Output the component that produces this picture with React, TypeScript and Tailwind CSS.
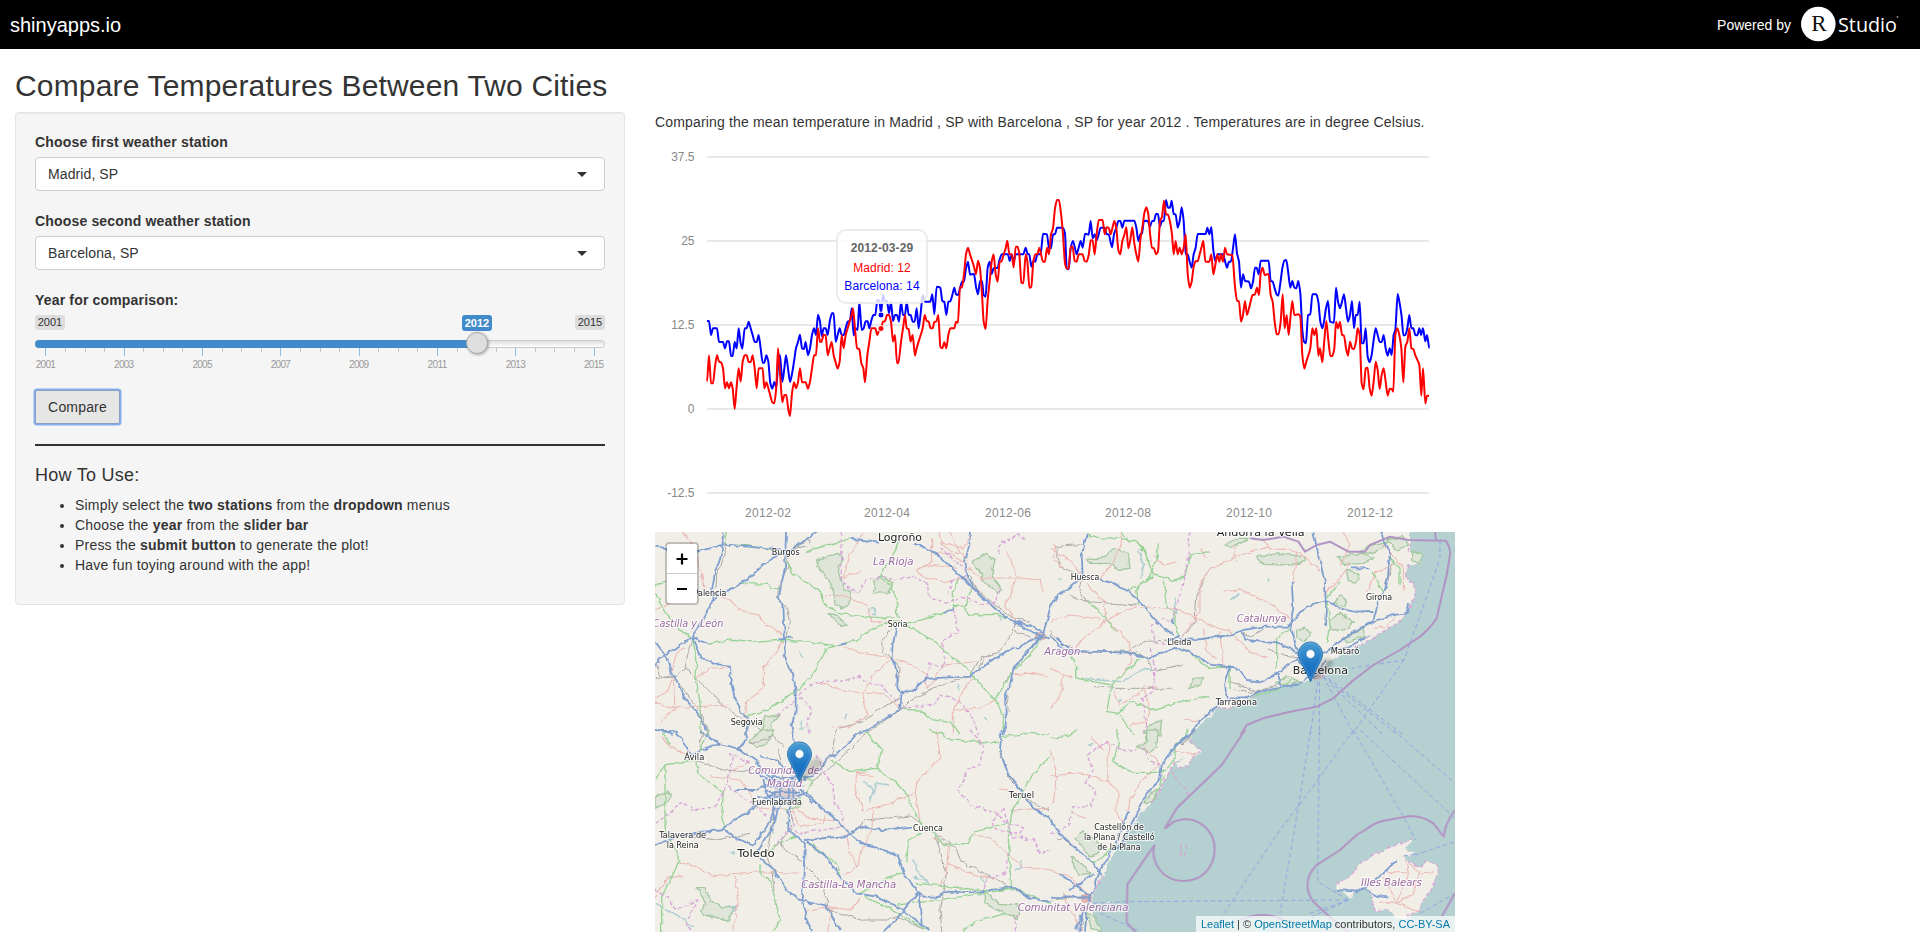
import React from "react";

type Layer = {
  motorway: string;
  primary: string;
  secondary: string;
  rail: string;
  border: string;
  park: string;
  water: string;
  ferry: string;
  maritime: string;
};

type Label = [text: string, x: number, y: number, length: number, kind: "town" | "city" | "region"];

type Sheet = { transform: string; layer: Layer; labels: Label[] };

const NORTH_WEST: Sheet = {
  transform: "translate(-5 -7) scale(0.33333)",
  layer: {
    motorway:
      "M15,65L60,70L145,78L180,70L222,58L290,65L330,68L408,74M218,20L218,60L212,95L195,140L187,190L187,225L160,285L125,335L75,375L45,388L15,350M45,388L15,425M45,388L55,410L60,435L85,475L105,520L130,550L165,600L175,630M125,335L150,385L155,400L185,410L200,418L240,422L243,470L255,525L275,560L300,590L285,630M408,20L405,130L390,195L387,220L400,240L402,290L405,340L403,390L425,440L437,490L437,560L425,600L428,630M500,20L465,45L440,65L408,78M605,42L690,50M408,78L370,95L335,125L290,165L240,195L190,205M790,55L830,70L860,85L900,125L945,165L985,205L1040,255L1090,290L1175,335L1200,340M960,20L958,60L945,110L955,160L985,205M1095,292L1140,300L1185,325M125,335L150,350L175,357M565,360L592,355M385,340L428,338M740,305L728,360L725,400L742,440L742,490L755,505L790,495L825,462L880,458L960,455L1000,425L1040,395L1090,370L1110,370L1130,350L1175,335M755,505L750,555L690,590L625,630M1175,335L1140,370L1090,430L1080,480L1065,510L1068,590L1060,630M885,262L910,248M1175,335L1190,290L1200,250M15,615L50,615L70,630M187,225L200,215L215,210",
    primary:
      "M232,20L225,60L290,62L330,70L400,75M470,80L530,60L600,42M15,180L45,172M275,175L355,178L365,190L395,190M175,357L250,343L320,352L395,345L480,352L565,362L620,345L660,315L720,290L770,295L830,280L885,260L910,248L910,200L925,165M408,110L430,145L515,200L520,235L570,265L640,275L735,280M745,280L740,230L725,180L690,160L700,130L720,110L745,50M770,300L840,340L900,390L965,445L1035,525L1060,570L1060,620M910,245L945,243L960,270L1040,268L1085,285M945,243L965,190M15,205L50,265L85,310L120,335M128,345L140,400L138,460L150,530L153,630M285,575L360,550L435,500L470,470L495,440L510,410L530,370L565,360M750,553L810,555L840,580L900,590L930,630M1035,520L1070,470L1085,440L1140,390L1170,345",
    secondary:
      "M150,150L170,190M100,20L135,80L165,190M15,255L60,235M190,205L240,225L270,255L320,270L350,300L400,330M400,345L370,390L340,430L340,490L290,530L285,590M15,530L60,548L140,545L235,540M140,460L180,430L240,425M640,25L600,90L580,160L630,140M525,210L570,212L650,240L665,290L745,290M580,365L640,385L725,400M725,400L680,440L650,480L640,520L655,570L600,605L550,605M725,400L800,425L830,450M825,462L835,490L880,420L980,410M845,40L845,110L800,135L820,155L880,170L950,160M870,50L900,80L945,85M845,80L910,90L950,120M805,130L840,120L920,130M900,20L915,60L955,110M1070,80L1100,155L1080,210L1065,240L1095,285M1000,160L1100,158L1170,165L1180,200M955,130L1000,165M1085,450L1140,445L1200,455M500,470L580,495L640,505L700,505L750,550M970,455L945,490L910,550L910,630M1035,525L990,550L910,555M70,455L75,550L30,590M105,370L80,385L60,450M870,20L875,50L940,70L960,30M15,520L50,500L70,460",
    rail:
      "M228,20L225,90L200,150L198,190M408,80L415,120L385,190L382,220L410,250L418,290L412,335M130,340L115,380L105,430L75,455L20,460M105,430L160,480L220,540L285,590L340,620M725,310L695,350L697,380L725,400M725,400L750,430L745,470M565,610L640,590L690,550L750,520M640,630L750,555L780,525L870,480L960,455L990,400L1050,380L1090,320L1095,290M985,430L1000,400L1030,390M1095,320L1150,340M960,150L985,200L1090,280L1140,290M1075,455L1065,475M20,420L30,450L70,458M1070,510L1075,560M440,70L475,40L480,55M75,460L120,520L150,560L180,625M408,78L470,62",
    border:
      "M575,20L572,90L575,170L620,205L650,165L700,155L735,165L790,155L830,175L840,215L890,235L940,215L1000,240L1040,230L1050,185M910,250L925,320L875,350L885,425L840,415L828,470M380,575L430,530L445,510L495,470L580,468L625,455L650,470L690,480L745,530L755,550L855,540L870,510L930,530L970,580L985,630M450,515L485,555L470,600L480,630M1045,85L1050,50L1090,40L1100,25L1125,45M870,70L955,140M895,210L905,170L950,150",
    park:
      "M500,105L530,95L565,85L575,100L565,140L580,190L605,200L600,235L575,250L555,235L550,195L535,165L505,130ZM675,165L700,155L728,175L715,205L670,203ZM965,110L1010,85L1035,105L1025,150L1055,190L1045,205L1000,170L985,135ZM535,265L560,270L590,300L575,307L555,285ZM345,575L390,570L365,600L370,630L330,630Z",
    water:
      "M655,255L675,250L668,270L680,265M445,380L460,400L450,385M455,590L450,610L465,605M1045,268L1055,285M925,480L930,495M1000,575L1012,590M585,580L590,565",
    ferry: "",
    maritime: "",
  },
  labels: [
    ["Burgos", 407, 91, 84, "town"],
    ["Palencia", 180, 213, 98, "town"],
    ["Logroño", 750, 47, 132, "city"],
    ["La Rioja", 730, 119, 122, "region"],
    ["Soria", 743, 305, 59, "town"],
    ["Segovia", 290, 600, 96, "town"],
    ["Castilla y León", 114, 306, 212, "region"],
  ],
};

const NORTH_EAST: Sheet = {
  transform: "translate(395 -7) scale(0.33333)",
  layer: {
    motorway:
      "M110,30L95,90L98,150L60,185L20,215L0,250M150,163L190,175L235,200L280,240L320,290L370,330M0,330L40,375L120,380L230,383L300,400L330,385L375,372M20,340L60,375M355,345L385,335L400,345L455,342L540,330L580,315L640,305L710,305L730,285L770,245L830,228L870,250L910,260L970,258M370,372L400,373L440,395L480,418L565,432L590,465L640,470L690,440L720,415L745,395M570,320L590,345L680,355L720,370L745,390M725,170L730,250L720,300L735,350L745,385M790,20L805,90L825,170L828,250L825,300M990,20L1020,90L1012,170L985,230L970,285L900,330L840,370L780,410M1078,235L1070,265L1030,270L970,290L930,310M540,430L525,480L530,520M775,455L740,480L690,485L630,500L585,520L530,520L500,545L450,590L420,630M690,485L685,440M905,130L960,130M835,375L890,370L960,330M370,300L368,280M740,400L790,460L830,405",
    primary:
      "M110,30L140,40L200,38L260,50L280,70L310,150L370,165L405,155L418,90L480,80M262,50L300,110M325,55L322,90L300,155L260,190L265,240M340,170L350,250L375,260L375,300L385,335M115,230L170,280L200,320M400,370L450,410L480,430L540,425L540,490M60,390L80,430L80,460L185,480L215,450L270,400M185,480L170,560L210,565L240,530L320,555L390,530L480,515M600,520L690,490L730,460M725,305L680,340L680,430M830,350L840,300L830,220L870,170M970,140L985,180L1000,200M1015,95L1050,130L1050,180M210,570L250,630M235,195L270,180L310,155M215,20L240,50",
    secondary:
      "M0,70L60,105L95,150M0,290L60,270L170,285L220,260L260,245M170,285L160,230L110,175M170,285L210,320L240,360L245,410L215,450M170,285L100,340L60,390M150,165L190,110L210,60L215,20M270,245L370,250L440,280L480,300L540,320L600,380L650,400M480,130L450,180L450,260L400,330M480,130L570,90L640,70L720,75L760,90L810,140M520,200L570,195L650,230L720,280M740,80L730,170M455,70L470,100M15,60L10,100L40,130M880,20L900,60L870,120M640,40L660,75M900,110L870,160L820,210M460,310L470,380L500,400M510,320L520,430M40,450L30,520L0,550M190,500L210,540L290,490L320,485M280,480L300,560L290,590L240,600M0,430L70,460M950,200L980,140L1030,120M1000,60L1060,130L1060,200M400,580L450,590M310,90L340,120L380,110M550,60L560,110M970,310L1010,305L1040,270",
    rail:
      "M15,65L70,60L100,60M20,70L30,125L90,150M60,210L110,230L90,200L98,155M110,230L190,235L260,240M230,380L280,350L355,345M95,382L220,378L290,395L310,440L360,430L400,420M130,485L200,490L280,490L370,490M470,140L440,220L435,290L400,335M540,470L620,500L680,480M570,320L600,335L640,310M650,370L700,390L740,395M1030,110L1000,200M545,490L620,505M0,320L40,360L95,378",
    border:
      "M420,20L415,80L400,180L380,240L370,290L345,280L305,300L315,350L350,360M300,370L315,430L310,500L275,520L290,600L280,630M1080,50L1078,80M1075,120L1065,155L1090,175L1095,215L1080,245L1050,290L1000,320L950,350L870,390M630,500L590,530L545,548L500,550",
    park:
      "M110,100L150,100L195,72L235,85L240,130L205,135L170,115L120,115ZM620,95L690,85L765,95L765,110L720,120L640,118ZM865,95L940,85L970,100L940,115L880,118ZM890,135L930,145L920,175L895,170ZM835,290L870,262L910,290L900,310L840,315ZM855,235L870,210L888,225L880,245ZM740,320L765,305L780,325L765,350L740,340ZM880,340L940,310L945,335L890,350ZM415,490L430,460L460,458L450,480ZM675,475L710,455L748,468L720,482ZM525,60L560,40L600,40L545,68ZM1010,45L1060,35L1075,60L1040,75ZM1085,80L1120,90L1105,118L1085,100ZM285,625L300,600L335,585L330,630ZM930,80L960,60L1010,50L1000,70L960,85Z",
    water:
      "M105,460L150,465L220,470L250,450L285,430L310,440M265,70L280,120L275,160M375,220L380,270M540,225L568,205M25,160L35,165M160,455L165,470M650,168L655,160M205,530L215,520",
    ferry:
      "M1170,45L1170,100L1125,230L1062,405L905,430M1062,405L905,630M820,455L905,615M820,455L1045,630M835,460L1060,630M808,470L808,630M803,470L785,600L780,630M845,480L1000,630",
    maritime:
      "M600,40L640,45L700,35L745,50L765,80L800,60L840,50L895,80L945,80L960,60L1020,35L1075,45L1188,47Q1202,70 1200,90L1190,150L1160,280Q1140,310 1110,335L1050,375L970,420L905,470L850,520L800,545L720,560L645,578L590,600L572,630M1155,20L1158,45",
  },
  labels: [
    ["Huesca", 105, 166, 86, "town"],
    ["Girona", 987, 224, 78, "town"],
    ["Catalunya", 635, 292, 150, "region"],
    ["Lleida", 388, 359, 72, "town"],
    ["Mataró", 885, 386, 86, "town"],
    ["Barcelona", 811, 446, 166, "city"],
    ["Tarragona", 559, 540, 124, "town"],
    ["Andorra la Vella", 632, 34, 264, "city"],
    ["Aragón", 37, 391, 108, "region"],
  ],
};

const SOUTH_WEST: Sheet = {
  transform: "translate(-5 198) scale(0.33333)",
  layer: {
    motorway:
      "M20,0L80,5L125,75L200,40L265,55L290,30L285,10M265,55L320,95L345,130L400,170M150,5L210,40M430,0L430,40M330,80L385,90L410,130M635,0L600,30L555,80L540,75L500,130L450,150M1055,0L1050,60L1065,110L1080,140L1115,185L1150,235L1200,265M15,345L100,315L220,297L260,265L290,250L330,220L370,190M220,295L260,325L310,345L350,290L380,230M255,180L310,180L360,160M465,185L510,230L560,270L600,310L640,345L690,355L745,380L765,440L800,480L820,500L860,500L890,485L980,487L1085,470L1140,505L1200,515M415,240L415,300L465,340L460,450L455,510L470,570L487,605M465,330L590,318L630,290L700,300L785,290M330,385L370,420L410,480L450,510L530,530L570,600M320,370L370,290L385,235M470,335L530,380L570,440L620,490L680,500L760,540L835,600M450,180L490,220M805,485L745,560L700,605M805,485L815,580M320,130L360,150L450,140M325,200L400,220L460,190M345,170L460,170M350,185L450,188M375,180L370,310M390,150L390,230M410,150L420,240M430,150L430,200M340,150L350,200L440,210M365,140L470,150",
    primary:
      "M15,150L45,105L130,90L150,60L175,0M45,105L45,290L65,340L90,390L60,450L35,500L35,605M140,90L145,130L220,185L215,260L225,290M545,90L600,125L680,115L720,145L765,185L800,260L815,285L855,310L880,345L950,340L975,305L1080,280M680,115L695,60L660,20L650,0M840,0L870,10L900,30L1045,38M1055,20L1140,10L1200,15M1200,80L1150,130L1115,190L1085,250L1075,320L1080,420L1085,470M815,310L775,330L770,400M765,430L710,445L630,490M800,460L900,470L980,480L1085,475M480,340L560,400L575,445M330,400L330,430L365,460L390,570L370,605M330,385L380,345L440,320M740,525L830,515L1000,490L1085,475M940,605L975,575L1070,550M640,500L710,530L830,600M470,190L490,150L430,130M1085,475L1200,520M60,45L40,10M400,240L450,230L450,200",
    secondary:
      "M80,395L140,410L190,440L260,430L330,425L450,430M255,440L265,500L250,605M860,0L870,80L800,160L795,185L810,270M795,185L700,230L640,240L615,180L620,130L650,125M590,310L600,370L620,410L590,435M620,410L640,350L665,300L670,240M850,320L895,350L890,420L870,470M890,400L960,430L1040,450M965,315L1015,320L1070,370L1120,410L1200,420M1080,240L1200,235M540,530L600,540L630,510M465,545L540,530M15,500L60,440L100,440M180,140L270,150L310,200M430,240L450,290L520,280L525,255M545,530L530,605M250,120L300,95M300,220L350,240L440,235L480,265L560,270M670,140L620,130M35,20L60,50L125,80M1050,180L1115,190",
    rail:
      "M155,0L150,50L135,90L220,120L285,125L330,95M400,50L370,20L300,40M560,0L550,70L510,120M660,0L560,95L480,160M120,320L200,330L300,310M375,230L350,380L370,430L375,480M425,240L425,290L395,330L395,350L450,390L510,450L540,540L640,570L710,570L740,560L830,600M590,318L650,270L780,258L815,285M855,310L890,430L870,530L875,605M855,310L915,350L930,390L1000,430L1085,475M1045,60L1080,150L1150,220L1200,240M385,60L400,120L400,160",
    border:
      "M960,0L1000,45L990,105L950,120L925,180L960,225L1040,250L1070,280L1120,290L1110,310L1040,300L1025,275M1025,270L1060,240L1075,280L1085,320L1150,330L1170,370L1200,360M1075,370L1065,430L1010,450L1000,480M500,75L520,130L550,165L550,210L575,250L580,290L520,300L440,310L420,240M250,80L235,150L215,200L195,230L130,240L95,215L15,285M235,70L300,100M235,170L320,230L350,260M15,480L60,510L80,540L140,510L110,580L130,605M1100,555L1095,605M380,345L420,290",
    park:
      "M140,470L165,470L180,510L215,535L255,530L235,570L160,555L155,540L170,520ZM1000,480L1045,520L1105,525L1105,565L1050,545L1005,520ZM300,35L330,0L375,0L350,45L320,50ZM15,200L55,185L65,200L40,225L15,235Z",
    water:
      "M790,390L800,420L840,465M790,440L830,455M640,155L670,175L660,215M670,195L680,160L720,165M240,370L255,365L250,375M15,520L90,560L130,590M990,440L1005,460M1110,390L1115,410L1095,420M240,530L260,530L245,545",
    ferry: "",
    maritime: "",
  },
  labels: [
    ["Ávila", 133, 91, 60, "town"],
    ["Comunidad de", 402, 131, 215, "region"],
    ["Madrid", 404, 170, 106, "region"],
    ["Fuenlabrada", 381, 224, 150, "town"],
    ["Talavera de", 98, 325, 141, "town"],
    ["la Reina", 98, 355, 96, "town"],
    ["Toledo", 318, 380, 113, "city"],
    ["Castilla-La Mancha", 596, 474, 285, "region"],
    ["Cuenca", 834, 302, 90, "town"],
    ["Teruel", 1114, 203, 76, "town"],
  ],
};

const SOUTH_EAST: Sheet = {
  transform: "translate(395 198) scale(0.33333)",
  layer: {
    motorway:
      "M435,0L380,45L335,105L330,150L290,190L270,230L250,270L215,340L180,370L150,420L135,470L120,500M0,265L20,300L60,340L130,400L155,435M25,430L70,460L120,500M0,500L120,505M100,550L85,605M110,545L105,605M95,550L78,600M235,245L200,340M60,480L130,430M120,500L100,550M860,480L920,485L950,470L985,440L1010,420L1040,390M940,475L985,498L1015,502",
    primary:
      "M200,0L205,40L190,95L250,130L330,130L375,90L375,45L410,20L410,0M0,25L50,20L80,0M120,400L150,385L200,345M345,130L330,170L300,220",
    secondary:
      "M0,140L60,130L115,135L175,155L170,100L180,50L170,30M175,155L210,190L195,240L225,280M330,100L270,160L240,210L230,245M0,60L20,130L10,220M120,20L160,60M0,420L60,440L115,500M40,490L60,540L95,600M280,50L330,100M375,60L440,75M1065,375L1075,430L1040,520M1040,520L1090,490L1110,420M1000,440L1040,515L985,520M1105,545L1040,520M1075,400L1110,430L1150,425M60,250L110,265M1010,425L1070,425",
    rail: "M0,510L60,505L120,495M25,330L40,325L60,345M90,600L110,560M440,0L390,45",
    border:
      "M135,60L170,35L230,65L280,55L300,95L335,105M170,35L115,75L130,120L105,160L140,180L120,230L65,230L60,280L30,310L0,310M858,462L900,440L930,400L990,365L1050,340L1090,330M1075,395L1110,412L1130,392L1165,410L1155,460L1120,510L1105,545L1070,560M1015,540L975,542L960,480M365,125L415,195M378,95L360,120L330,180L300,225M160,435L130,490M392,345V375M410,345L403,375M415,30L455,60L425,85L410,110L380,118",
    park:
      "M290,0L325,0L320,50L295,68L262,50L290,35ZM285,215L300,190L320,180L315,205L290,225ZM75,325L100,305L140,330L150,370L120,378L95,350ZM60,380L95,400L120,430L85,435ZM110,550L130,555L155,605L125,595Z",
    water: "M115,45L130,40",
    ferry:
      "M782,0L745,230L690,550M808,0L803,455L895,510M910,0L800,155L690,300L515,560M910,0L1060,260L1097,330M1030,0L1215,160M930,0L1215,265M130,520L230,515L895,510M1095,375L1215,335M1110,550L1215,490M895,510L780,550M895,510L700,600M130,540L270,605M1060,378L1100,372",
    maritime:
      "M585,0L515,105L380,235L345,295L372,275C440,250 495,300 494,361C490,420 450,455 395,453C340,450 300,400 313,345L232,463L230,578L260,610M1215,240Q1185,280 1181,320L1150,280Q1120,258 1080,258L1000,272Q970,280 950,297L920,315L870,360L800,405C765,440 765,480 790,515L860,580L900,610M1215,490L1175,560M570,570Q640,540 700,570",
  },
  labels: [
    ["Comunitat Valenciana", 69, 542, 332, "region"],
    ["Castellón de", 207, 301, 149, "town"],
    ["la Plana / Castelló", 208, 331, 212, "town"],
    ["de la Plana", 207, 361, 130, "town"],
    ["Illes Balears", 1024, 467, 182, "region"],
  ],
};

const SHEETS = [NORTH_WEST, NORTH_EAST, SOUTH_WEST, SOUTH_EAST];

const BARCELONA_WEST =
  "171,663 177,663 183,705 189,685 201,685 207,726 219,726 225,745 231,724 237,724 243,768 248,768 254,726 260,745 266,685 272,730 277,746 284,685 290,685 296,665 302,685 308,705 314,726 320,726 326,705 332,745 338,788 343,788 349,766 355,785 361,850 367,866 373,846 379,862 385,785 390,765 397,846 403,805 408,766 414,805 420,846 426,822 432,785 438,745 444,726 450,704 456,745 462,747 467,726 474,766 480,745 486,705 492,685 498,705 504,644 510,665 515,708 521,685 527,685 533,705 540,660 546,640 551,640 557,725 563,705 569,685 575,705 581,705 587,685 593,665 600,663 605,625 611,706 617,685 623,690 628,605 635,690 641,685 647,664 653,664 658,685 664,662 670,645 676,645 682,600 688,603 693,640 699,585 705,603 711,603 717,640 723,605 729,663 735,645 741,645 747,665 753,605 759,645 765,645 770,605 776,645 782,645 788,665 794,665 800,625 806,685 812,640 818,585 824,605 841,605 847,583 853,643 860,560 871,563 877,603 883,606 889,645 895,605 901,604 907,585 913,563 918,583 924,585 930,565 936,545 942,545 948,505 954,485 960,524 972,522 978,560 984,583 990,543 996,543 1001,585 1007,590 1013,503 1019,485 1025,522 1031,504 1043,504 1048,482 1055,463 1074,463 1079,483 1085,463 1091,485 1097,463 1120,463 1127,443 1133,463 1138,463 1144,500 1150,483 1156,485 1162,463 1172,463";
const BARCELONA_EAST =
  "2,463 9,401 21,403 27,445 33,445 39,403 45,403 51,383 68,383 75,400 80,505 86,508 92,445 99,423 105,445 110,463 116,443 122,423 128,443 135,401 146,404 152,363 158,415 164,403 170,421 176,403 182,383 194,383 200,403 206,403 216,442 222,403 229,383 235,363 241,363 247,383 253,362 283,362 289,383 295,423 301,403 306,400 312,362 323,363 330,380 336,363 342,363 348,342 354,342 360,380 366,363 372,363 378,300 384,323 390,323 395,302 401,342 407,343 413,383 419,363 425,322 431,363 437,463 443,463 449,485 455,503 461,463 467,443 473,402 497,402 502,383 508,403 514,382 520,450 526,485 532,463 549,463 555,483 561,503 567,485 573,485 579,445 585,403 591,460 597,485 603,563 609,523 615,543 627,545 633,565 639,545 645,503 650,503 656,523 662,482 686,482 692,543 698,545 704,565 710,583 715,587 721,550 727,505 733,482 739,480 745,520 751,563 757,543 763,563 769,565 775,543 781,580 787,690 792,725 798,730 804,645 811,643 817,583 829,583 835,605 841,665 847,685 852,665 858,625 864,603 870,665 882,668 888,563 894,605 900,625 906,605 912,583 918,625 924,665 930,645 936,603 942,685 947,645 953,645 959,605 965,730 971,730 977,685 983,770 989,787 995,765 1001,720 1007,685 1013,705 1019,726 1025,726 1031,705 1037,745 1043,767 1049,745 1055,765 1061,705 1066,690 1073,582 1079,610 1085,650 1090,706 1096,705 1102,685 1108,645 1114,685 1120,685 1126,705 1132,706 1138,685 1143,705 1149,685 1156,724 1161,705 1168,745";
const MADRID_WEST =
  "171,845 177,766 183,850 189,850 195,800 201,766 207,785 213,787 219,805 225,865 231,847 237,865 243,847 248,865 254,927 260,860 266,805 272,845 278,785 284,766 290,766 296,786 302,786 308,766 314,805 320,865 326,805 338,805 343,865 349,847 355,865 361,887 367,907 373,910 379,860 384,745 390,820 397,907 403,885 409,885 415,930 420,948 426,880 432,847 438,865 444,847 450,805 456,847 467,847 474,866 480,845 486,805 492,766 498,766 504,685 510,726 515,724 521,704 527,706 533,766 539,745 545,726 551,766 557,787 563,806 569,785 575,705 581,745 587,705 593,685 600,660 605,645 609,625 615,685 621,745 628,747 634,790 640,805 645,847 652,766 658,725 664,685 676,685 682,705 688,690 693,685 699,665 705,664 711,645 717,645 723,665 729,725 735,705 741,790 745,790 753,726 759,685 765,645 770,685 776,687 782,725 788,705 795,767 800,745 812,705 818,685 824,645 830,663 836,665 842,685 848,685 853,666 859,665 865,645 871,740 877,745 883,727 889,745 895,705 901,685 913,685 918,665 924,668 930,560 936,563 942,523 948,463 954,443 960,463 972,500 978,523 984,482 990,505 996,583 1001,665 1007,687 1013,600 1019,545 1025,485 1031,463 1037,523 1043,545 1049,485 1055,484 1061,463 1067,445 1072,422 1078,462 1085,463 1091,502 1097,440 1103,440 1108,463 1114,548 1120,550 1127,463 1132,483 1138,563 1144,560 1150,485 1156,463 1162,463 1168,443";
const MADRID_EAST =
  "-2,443 3,463 9,485 15,485 21,443 27,463 33,403 39,385 45,325 51,300 57,300 63,340 69,403 75,490 80,505 86,506 92,440 98,440 104,483 110,485 116,463 128,463 134,483 140,485 146,466 152,421 158,421 164,463 170,403 176,360 188,360 194,403 200,382 206,383 212,403 217,385 223,363 229,385 235,450 241,463 247,423 253,405 259,382 265,445 271,420 277,382 283,430 289,463 295,485 301,420 307,383 313,340 319,322 325,343 330,400 336,443 342,445 348,463 354,455 360,363 366,350 372,302 378,343 384,344 390,365 396,403 401,463 407,423 413,463 419,443 425,463 431,443 437,403 443,520 449,563 455,545 461,500 467,483 473,484 479,463 485,440 490,422 496,485 508,485 514,463 520,523 526,495 532,463 538,485 543,463 549,485 555,443 561,463 577,465 585,560 591,603 597,603 603,665 609,645 615,603 621,645 627,625 638,585 645,583 651,563 657,585 662,520 668,503 674,525 686,522 692,585 698,605 704,665 710,703 716,703 722,665 728,583 734,685 740,645 746,705 752,645 757,603 763,645 775,643 781,650 787,765 793,806 799,785 811,745 817,685 823,705 829,685 835,767 840,745 847,787 853,720 859,663 865,720 871,768 877,768 883,745 888,665 894,685 900,665 906,705 912,706 918,745 924,767 930,725 936,745 942,747 948,725 953,685 959,705 965,850 971,868 977,805 983,803 989,865 995,887 1001,845 1007,785 1013,810 1019,867 1025,825 1031,805 1037,845 1043,887 1049,866 1055,867 1060,875 1066,705 1072,685 1078,705 1084,745 1090,847 1096,740 1102,725 1108,685 1114,745 1120,747 1126,766 1138,795 1144,887 1149,805 1156,910 1161,887 1167,887";

const LAYER_STYLE: { key: keyof Layer; stroke: string; width: number; dash?: string; fill?: string }[] = [
  { key: "park", stroke: "#a5c8a2", width: 4, fill: "#dfe6d9" },
  { key: "water", stroke: "#a9cdd0", width: 4 },
  { key: "rail", stroke: "#aaa8a5", width: 3 },
  { key: "secondary", stroke: "#ebb9b5", width: 3.2 },
  { key: "primary", stroke: "#98d296", width: 4 },
  { key: "border", stroke: "#d6a6d6", width: 4, dash: "12 7" },
  { key: "motorway", stroke: "#7f9fce", width: 5.4 },
];

function SheetLines({ sheet }: { sheet: Sheet }) {
  return (
    <g transform={sheet.transform} strokeLinejoin="round">
      {LAYER_STYLE.map((s) => (
        <path key={s.key} d={sheet.layer[s.key]} fill={s.fill ?? "none"} stroke={s.stroke} strokeWidth={s.width} strokeDasharray={s.dash} />
      ))}
    </g>
  );
}

function SheetSea({ sheet }: { sheet: Sheet }) {
  return (
    <g transform={sheet.transform} fill="none">
      <path d={sheet.layer.ferry} stroke="#92a2e4" strokeWidth="3" strokeDasharray="13 9" />
      <path d={sheet.layer.maritime} stroke="#b193c4" strokeWidth="6" strokeLinejoin="round" />
    </g>
  );
}

const LABEL_SIZE = { town: 27, city: 34, region: 31 };

function SheetLabels({ sheet }: { sheet: Sheet }) {
  return (
    <g transform={sheet.transform} textAnchor="middle" fontFamily="'DejaVu Sans', sans-serif">
      {sheet.labels.map(([text, x, y, length, kind]) => (
        <text
          key={text}
          x={x}
          y={y}
          fontSize={LABEL_SIZE[kind]}
          fontStyle={kind === "region" ? "italic" : "normal"}
          fill={kind === "region" ? "#9a6a9f" : "#222"}
          stroke="#fff"
          strokeOpacity="0.75"
          strokeWidth="7"
          strokeLinejoin="round"
          paintOrder="stroke"
          textLength={length}
          lengthAdjust="spacingAndGlyphs"
        >
          {text}
        </text>
      ))}
    </g>
  );
}

function Pin({ x, y }: { x: number; y: number }) {
  return (
    <g transform={`translate(${x} ${y})`}>
      <path d="M13 40L21 23Q27 14 34 18Q38 23 29 30Z" fill="#000" opacity="0.17" filter="url(#soft)" />
      <path
        d="M12.5 0.5C5.9 0.5 0.5 5.9 0.5 12.6C0.5 15.4 1.5 17.9 2.8 20.3L12.5 40.2L22.2 20.3C23.5 17.9 24.5 15.4 24.5 12.6C24.5 5.9 19.1 0.5 12.5 0.5Z"
        fill="url(#pin)"
        stroke="#2e7ab3"
      />
      <path d="M12.5 1.6C6.5 1.6 1.6 6.5 1.6 12.6C1.6 15.2 2.5 17.5 3.8 19.8L12.5 37.6L21.2 19.8C22.5 17.5 23.4 15.2 23.4 12.6C23.4 6.5 18.5 1.6 12.5 1.6Z" fill="none" stroke="#fff" strokeOpacity="0.15" />
      <circle cx="12.5" cy="12.5" r="4.4" fill="#fff" stroke="#2e7ab3" strokeWidth="0.6" />
    </g>
  );
}

function MapView() {
  return (
    <div className="relative h-[400px] w-[800px] overflow-hidden bg-[#f1eee8]">
      <svg width="800" height="400" viewBox="0 0 800 400" className="block">
        <defs>
          <linearGradient id="pin" x1="0" y1="0" x2="0" y2="1">
            <stop offset="0" stopColor="#4b9ed3" />
            <stop offset="0.6" stopColor="#1a73c4" />
            <stop offset="1" stopColor="#2571b5" />
          </linearGradient>
          <filter id="soft" x="-30%" y="-30%" width="160%" height="160%">
            <feGaussianBlur stdDeviation="1.8" />
          </filter>
          <filter id="wander" filterUnits="userSpaceOnUse" x="0" y="0" width="800" height="400" colorInterpolationFilters="sRGB">
            <feTurbulence type="fractalNoise" baseFrequency="0.13" numOctaves="2" seed="4" result="noise" />
            <feDisplacementMap in="SourceGraphic" in2="noise" scale="5" xChannelSelector="R" yChannelSelector="G" />
          </filter>
        </defs>
        <g filter="url(#wander)">
          <path
            transform="translate(395 -7) scale(0.33333)"
            fill="#b5d0d0"
            d="M1080,-20L1080,60L1085,85L1120,88L1112,115L1075,120L1065,155L1090,175L1095,215L1080,245L1050,290L1000,320L950,350L870,390L835,410L815,455L780,468L730,480L680,488L630,500L590,530L545,548L500,550L480,575L450,600L425,632L1260,632L1260,-20Z"
          />
          <path
            transform="translate(395 198) scale(0.33333)"
            fill="#b5d0d0"
            d="M440,0L410,35L455,60L450,72L425,85L410,110L382,118L380,100L410,85L378,95L360,120L330,180L300,225L270,250L250,290L215,340L180,385L160,435L130,490L125,520L130,560L155,640L1260,640L1260,0Z"
          />
          <path
            transform="translate(395 198) scale(0.33333)"
            fill="#f1eee8"
            d="M858,462L900,440L930,400L990,365L1050,340L1090,330L1085,345L1065,350L1070,365L1095,365L1080,378L1065,375L1075,395L1110,412L1130,392L1165,410L1155,460L1120,510L1105,545L1070,565L1040,565L1015,540L975,542L960,480L935,470L910,490L905,505L890,495L860,478Z"
          />
          <ellipse cx="130" cy="261" rx="13" ry="6" fill="#dccdd0" />
          <ellipse cx="432" cy="366" rx="5" ry="5" fill="#e6b3ae" />
          <ellipse cx="386" cy="104" rx="6" ry="4" fill="#d8b4b0" />
          <ellipse cx="663" cy="142" rx="9" ry="6" fill="#c2b3bb" />
          {SHEETS.map((s, i) => (
            <SheetLines key={i} sheet={s} />
          ))}
        </g>
        {SHEETS.map((s, i) => (
          <SheetSea key={i} sheet={s} />
        ))}
        {SHEETS.map((s, i) => (
          <SheetLabels key={i} sheet={s} />
        ))}
        <Pin x={132} y={209.5} />
        <Pin x={643} y={109.5} />
      </svg>
      <div className="absolute left-[10px] top-[10px] flex w-[34px] flex-col overflow-hidden rounded-[4px] border-2 border-black/20 bg-white bg-clip-padding text-black">
        <div className="flex h-[30px] items-center justify-center border-b border-[#ccc]">
          <svg width="12" height="12" viewBox="0 0 12 12"><path d="M6 0.5V11.5M0.5 6H11.5" stroke="#000" strokeWidth="2.2" /></svg>
        </div>
        <div className="flex h-[29px] items-center justify-center">
          <svg width="12" height="12" viewBox="0 0 12 12"><path d="M1 6H11" stroke="#000" strokeWidth="2" /></svg>
        </div>
      </div>
      <div className="absolute bottom-0 right-0 h-[16px] whitespace-nowrap bg-white/70 px-[5px] text-[11px] leading-[16px] text-[#333]">
        <span className="text-[#0078a8]">Leaflet</span> | © <span className="text-[#0078a8]">OpenStreetMap</span> contributors,{" "}
        <span className="text-[#0078a8]">CC-BY-SA</span>
      </div>
    </div>
  );
}

const Y_AXIS: [string, number][] = [["37.5", 25], ["25", 109], ["12.5", 193], ["0", 277], ["-12.5", 361]];
const X_AXIS: [string, number][] = [["2012-02", 113], ["2012-04", 232], ["2012-06", 353], ["2012-08", 473], ["2012-10", 594], ["2012-12", 715]];

/** Cubic path through the points whose tangents flatten at local extremes. */
function smoothPath(points: string) {
  const p = points.split(" ").map((s) => s.split(",").map(Number));
  const slope = p.map((_, i) => {
    if (i === 0 || i === p.length - 1) return 0;
    const a = (p[i][1] - p[i - 1][1]) / (p[i][0] - p[i - 1][0]);
    const b = (p[i + 1][1] - p[i][1]) / (p[i + 1][0] - p[i][0]);
    return a * b <= 0 ? 0 : (2 * a * b) / (a + b);
  });
  let d = `M${p[0][0]},${p[0][1]}`;
  for (let i = 1; i < p.length; i++) {
    const h = (p[i][0] - p[i - 1][0]) / 4;
    d += `C${p[i - 1][0] + h},${p[i - 1][1] + slope[i - 1] * h} ${p[i][0] - h},${p[i][1] - slope[i] * h} ${p[i][0]},${p[i][1]}`;
  }
  return d;
}

function Series({ west, east, color }: { west: string; east: string; color: string }) {
  return (
    <g fill="none" stroke={color} strokeWidth="6" strokeLinejoin="round">
      <path transform="translate(-5 -32) scale(0.33333)" d={smoothPath(west)} />
      <path transform="translate(385 -32) scale(0.33333)" d={smoothPath(east)} />
    </g>
  );
}

function Chart() {
  return (
    <div className="relative h-[400px] w-[800px] tracking-normal">
      <svg width="800" height="400" viewBox="0 0 800 400" className="block" fontSize="12" fill="#888">
        {Y_AXIS.map(([label, y]) => (
          <g key={label}>
            <text x="39.5" y={y + 4} textAnchor="end">{label}</text>
            <path d={`M52 ${y}H774`} stroke="#e8e8e8" strokeWidth="2" />
          </g>
        ))}
        {X_AXIS.map(([label, x]) => (
          <text key={label} x={x} y="385" textAnchor="middle" textLength="46">{label}</text>
        ))}
        <Series west={BARCELONA_WEST} east={BARCELONA_EAST} color="#0000ff" />
        <Series west={MADRID_WEST} east={MADRID_EAST} color="#ff0000" />
        <circle cx="226" cy="183" r="3" fill="#0000ff" stroke="#fff" />
        <circle cx="226" cy="196.500" r="3" fill="#ff0000" stroke="#fff" />
      </svg>
      <div className="absolute left-[181px] top-[97px] flex h-[75px] w-[92px] flex-col items-center whitespace-nowrap rounded-[10px] border-2 border-[#e6e6e6]/80 bg-white/80 pt-[6px] text-[12px] tracking-[0.1px]">
        <div className="my-[3px] font-bold leading-[17px] text-[#666]">2012-03-29</div>
        <div className="leading-[17px] text-[#ff0000]">Madrid: 12</div>
        <div className="mt-px leading-[17px] text-[#0000ff]">Barcelona: 14</div>
      </div>
    </div>
  );
}

function Select({ label, value }: { label: string; value: string }) {
  return (
    <div className="mb-[20px]">
      <div className="mb-[5px] h-[20px] font-bold">{label}</div>
      <div className="flex h-[34px] items-center justify-between rounded-[4px] border border-[#ccc] bg-white pl-[12px] pr-[17px] tracking-[0.1px]">
        <span>{value}</span>
        <span className="border-x-[5px] border-t-[5px] border-x-transparent border-t-[#333]" />
      </div>
    </div>
  );
}

const TICKS = Array.from({ length: 29 }, (_, i) => i);

function YearSlider() {
  return (
    <div>
      <div className="mb-[5px] h-[20px] font-bold">Year for comparison:</div>
      <div className="relative h-[75px] tracking-normal">
        <div className="flex justify-between text-[11px] leading-[15px]">
          <span className="w-[30px] rounded-[3px] bg-[#ddd] text-center">2001</span>
          <span className="w-[30px] rounded-[3px] bg-[#ddd] text-center">2015</span>
        </div>
        <div className="mt-[10px] h-[8px] rounded-[4px] border border-[#ccc] bg-gradient-to-b from-[#dedede] to-white">
          <div className="-ml-px -mt-px h-[8px] w-[442px] rounded-l-[4px] bg-[#428bca]" />
        </div>
        <svg width="570" height="24" className="block" fontSize="10" fill="#999" textAnchor="middle">
          {TICKS.map((i) => {
            const x = 10.4 + i * 19.58;
            const major = i % 4 === 0;
            return (
              <g key={i}>
                <rect x={Math.round(x)} y="0" width="1" height={major ? 8 : 4} fill={major ? "#8fbbe4" : "#c4c4c4"} />
                {major && <text x={x + 0.4} y="20" textLength="20">{2001 + i / 2}</text>}
              </g>
            );
          })}
        </svg>
        <span className="absolute left-[427px] top-0 h-[16px] w-[30px] rounded-[3px] bg-[#428bca] text-center text-[11px] font-bold leading-[16px] text-white">2012</span>
        <span className="absolute left-[431px] top-[17px] size-[22px] rounded-full border border-[#aaa] bg-[#dedede] shadow-[1px_1px_3px_rgba(0,0,0,0.3)]" />
      </div>
    </div>
  );
}

export default function App() {
  return (
    <div className="h-[942px] w-[1920px] overflow-hidden bg-white font-['Liberation_Sans',Arial,sans-serif] text-[14px] leading-[20px] text-[#333]">
      <header className="flex h-[49px] items-center justify-between bg-black pl-[10px] pr-[20px] text-white">
        <div className="text-[20px]">shinyapps.io</div>
        <div className="flex items-center">
          <span className="mr-[9px] text-[14px]">Powered by</span>
          <svg width="100" height="40" viewBox="0 0 100 40">
            <circle cx="18.300" cy="19" r="17.300" fill="#fff" />
            <text x="19" y="26" fontFamily="'Liberation Serif', serif" fontSize="23" fill="#111" textAnchor="middle">R</text>
            <text x="38" y="26.500" fontFamily="'Open Sans', sans-serif" fontSize="20" fill="#fff" textLength="59" lengthAdjust="spacingAndGlyphs">Studio</text>
            <circle cx="97.500" cy="12" r="1" fill="#888" />
          </svg>
        </div>
      </header>
      <main className="px-[15px] pt-[20px] tracking-[0.17px]">
        <h2 className="mb-[10px] text-[30px] leading-[33px]">Compare Temperatures Between Two Cities</h2>
        <div className="flex items-start gap-[30px]">
          <section className="h-[493px] w-[610px] rounded-[4px] border border-[#e3e3e3] bg-[#f5f5f5] p-[19px] shadow-[inset_0_1px_1px_rgba(0,0,0,0.05)]">
            <Select label="Choose first weather station" value="Madrid, SP" />
            <Select label="Choose second weather station" value="Barcelona, SP" />
            <YearSlider />
            <button className="block h-[34px] w-[85px] rounded-[2px] border border-[#8c9fc0] bg-[#e6e6e6] shadow-[0_0_0_1.500px_#84aef0]">Compare</button>
            <div className="mt-[20px] h-[2px] bg-[#333]" />
            <h4 className="mb-[10px] mt-[19px] text-[18px] leading-[20px] tracking-[0.25px]">How To Use:</h4>
            <ul className="list-disc pl-[40px] tracking-[0.2px]">
              <li>Simply select the <b>two stations</b> from the <b>dropdown</b> menus</li>
              <li>Choose the <b>year</b> from the <b>slider bar</b></li>
              <li>Press the <b>submit button</b> to generate the plot!</li>
              <li>Have fun toying around with the app!</li>
            </ul>
          </section>
          <section>
            <p className="h-[20px] tracking-[0.16px]">Comparing the mean temperature in Madrid , SP with Barcelona , SP for year 2012 . Temperatures are in degree Celsius.</p>
            <Chart />
            <div className="tracking-normal">
              <MapView />
            </div>
          </section>
        </div>
      </main>
    </div>
  );
}
